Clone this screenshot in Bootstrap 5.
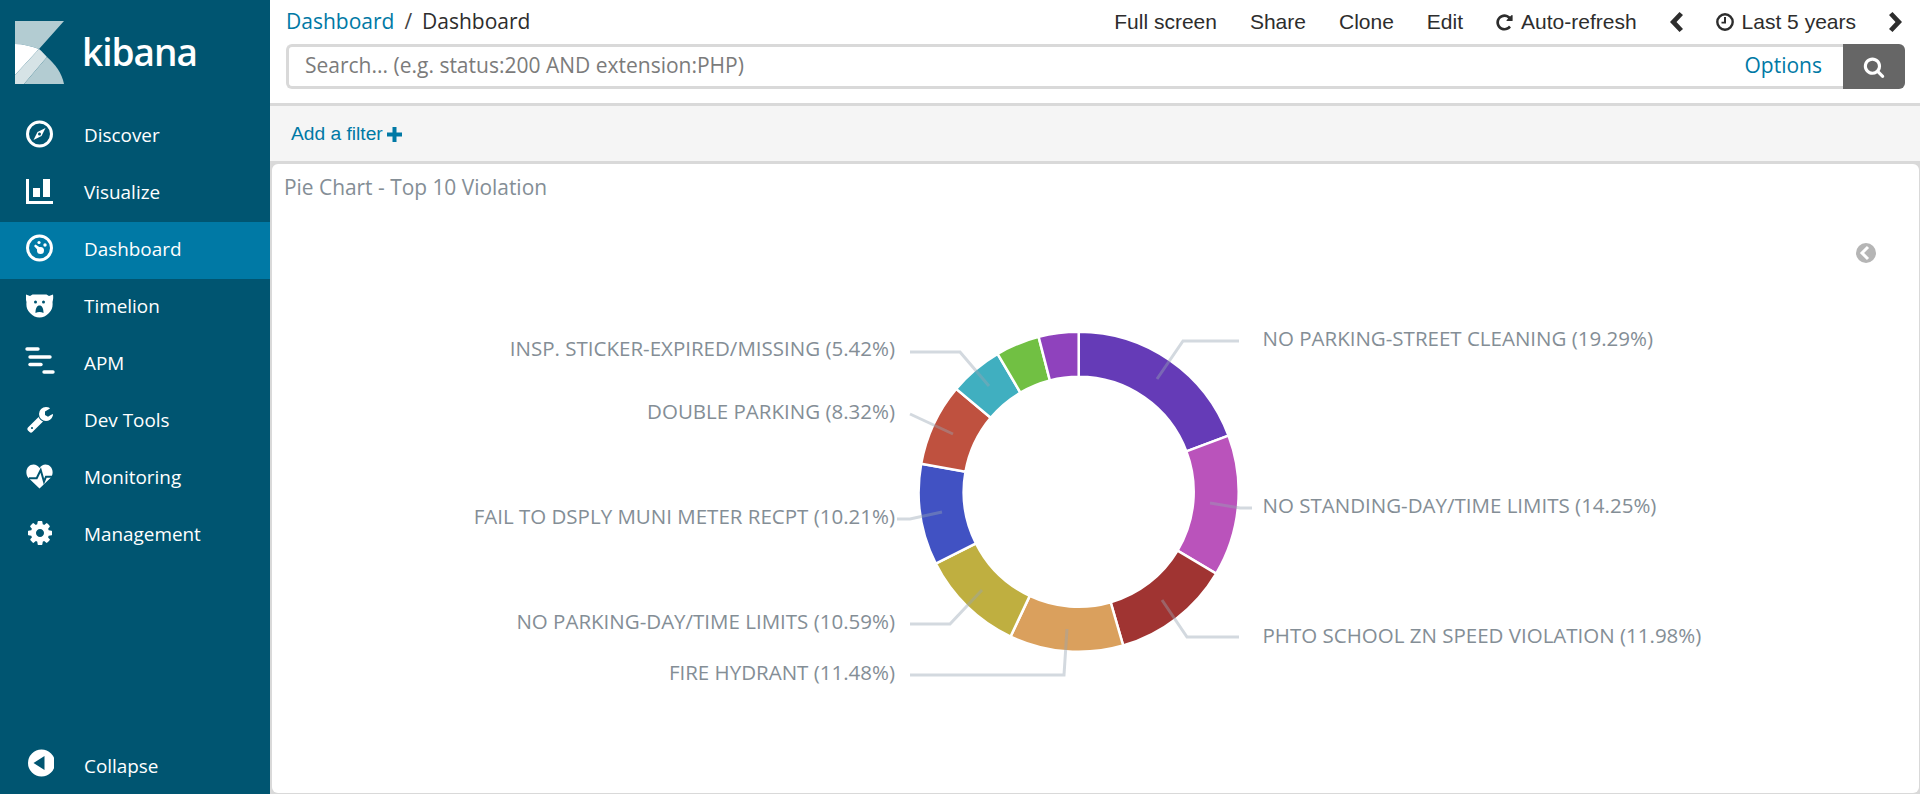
<!DOCTYPE html>
<html>

<head>
    <title>Dashboard - Kibana</title>
    <link href="https://cdn.jsdelivr.net/npm/bootstrap@5.3.0/dist/css/bootstrap.min.css" rel="stylesheet">
    <style>
        html, body { height: 100%; }
        body { font-family: "Open Sans", sans-serif; background: #fff; overflow: hidden; }
        .side-bar { width: 270px; background: #005571; height: 794px; flex: none; }
        .brand-row { height: 108px; padding: 21px 0 0 15px; }
        .brand-name { font-size: 37px; line-height: 1; color: #fff; margin: 12px 0 0 18px; font-weight: 600; letter-spacing: -1px; }
        .side-link { height: 57px; color: #fff; font-size: 18.9px; padding: 0 0 2px 26px; }
        .side-link:hover, .side-link:focus { color: #fff; }
        .side-link.is-on { background: #0079a5; }
        .side-link.at-end { padding: 2px 0 0 26px; }
        .side-ico { width: 28px; height: 28px; margin: -4px 30px 0 0; flex: none; fill: #fff; }
        .side-link.at-end .side-ico { margin-top: -8px; }
        .main-col { min-width: 0; height: 794px; background: #d9d9d9; }
        .top-area { background: #fff; height: 103px; padding: 0 15px 0 16px; }
        .crumb-row { height: 44px; }
        .breadcrumb { font-size: 21px; --bs-breadcrumb-divider-color: #444; --bs-breadcrumb-item-active-color: #2d2d2d; --bs-breadcrumb-margin-bottom: 0; --bs-breadcrumb-item-padding-x: 10px; }
        .breadcrumb a { color: #0079a5; text-decoration: none; }
        .top-actions { font-family: "Liberation Sans", Arial, sans-serif; font-size: 21px; color: #2d2d2d; gap: 33px; padding-right: 3px; }
        .top-actions svg { fill: #2d2d2d; flex: none; }
        .query-box { height: 45px; border: 3px solid #d9d9d9; border-right: 0; border-radius: 6px 0 0 6px; padding: 0 21px 0 16px; background: #fff; }
        .query-box input { border: 0; outline: 0; padding: 0 0 2px; font-size: 21px; color: #333; font-family: "Open Sans", sans-serif; }
        .query-box input::placeholder { color: #7b7b7b; opacity: 1; }
        .query-box a { font-size: 21px; color: #0079a5; text-decoration: none; padding-bottom: 2px; }
        .query-btn { width: 62px; height: 45px; background: #666; border-radius: 0 6px 6px 0; flex: none; border: 0; }
        .filter-bar { height: 61px; flex: none; background: #f5f5f5; border-top: 3px solid #d9d9d9; border-bottom: 3px solid #d9d9d9; padding: 2px 0 0 21px; font-family: "Liberation Sans", Arial, sans-serif; font-size: 19.2px; color: #0079a5; }
        .filter-bar svg { fill: #0079a5; margin-left: 4px; }
        .panel-box { flex: 1 1 auto; margin: 0 1px 1px 2px; border: 0; border-radius: 6px; background: #fff; position: relative; }
        .panel-title { font-size: 20.9px; color: #848e96; padding: 9px 0 0 12px; line-height: 28px; }
        .pie-canvas { position: absolute; left: -272px; top: -164px; width: 1920px; height: 794px; pointer-events: none; }
        .pie-canvas text { font-family: "Open Sans", sans-serif; font-size: 20.5px; fill: #848e96; }
        .leader { fill: none; stroke: rgba(150, 164, 178, .42); stroke-width: 3; }
    </style>
</head>

<body class="d-flex">
    <nav class="side-bar d-flex flex-column">
        <div class="brand-row d-flex align-items-start">
            <svg width="49" height="63" viewBox="0 0 49 63">
                <path fill="#b3ccd2" d="M0 0H49L24 28C16 25 8 23 0 23Z" />
                <path fill="#fff" d="M0 23C8 23 16 25 24 28L0 54Z" />
                <path fill="#d6e3e6" d="M0 54L24 28C27 30 29 33 32 36L9 63H0Z" />
                <path fill="#b3ccd2" d="M9 63L32 36C40 43 47 52 49 63Z" />
            </svg>
            <div class="brand-name">kibana</div>
        </div>
        <a class="nav-link side-link d-flex align-items-center" href="#">
            <svg class="side-ico" viewBox="0 0 28 28">
                <circle cx="13.500" cy="14" r="12" fill="none" stroke="#fff" stroke-width="3" />
                <path d="M19.500 8L15.500 16L7.500 20L11.500 12ZM13.500 12.500A1.500 1.500 0 1 0 13.500 15.500A1.500 1.500 0 1 0 13.500 12.500Z" fill-rule="evenodd" />
            </svg>Discover
        </a>
        <a class="nav-link side-link d-flex align-items-center" href="#">
            <svg class="side-ico" viewBox="0 0 28 28">
                <path d="M0 2H3V24H27V27H0ZM7 11H14V20H7ZM17 2H24V20H17Z" />
            </svg>Visualize
        </a>
        <a class="nav-link side-link is-on d-flex align-items-center" href="#">
            <svg class="side-ico" viewBox="0 0 28 28">
                <circle cx="13.500" cy="14" r="12" fill="none" stroke="#fff" stroke-width="3" />
                <circle cx="14.500" cy="16.500" r="3.500" />
                <path d="M8 12L9.500 10.500L15.500 14.500L13 17.500Z" />
                <circle cx="19" cy="11" r="1.700" />
                <circle cx="13" cy="8.500" r="1.600" />
            </svg>Dashboard
        </a>
        <a class="nav-link side-link d-flex align-items-center" href="#">
            <svg class="side-ico" viewBox="0 0 28 28">
                <path fill-rule="evenodd" d="M0 3.500L4 5L6.500 3.500H20.500L23 5L27 3.500C27.500 7 27 9 26.500 11C27 16 26 19 23 22C20 25 17 26.500 13.500 26.500C10 26.500 7 25 4 22C1 19 0 16 .5 11C0 9 -.5 7 0 3.500ZM9.500 9.500A1.500 1.500 0 1 0 9.500 12.500A1.500 1.500 0 1 0 9.500 9.500ZM17.500 9.500A1.500 1.500 0 1 0 17.500 12.500A1.500 1.500 0 1 0 17.500 9.500ZM9.500 22C9.500 17 11 14.500 13.500 14.500C16 14.500 17.500 17 17.500 22C15 20.500 12 20.500 9.500 22Z" />
            </svg>Timelion
        </a>
        <a class="nav-link side-link d-flex align-items-center" href="#">
            <svg class="side-ico" viewBox="0 0 28 28" style="overflow:visible">
                <g fill="none" stroke="#fff" stroke-width="3.400" stroke-linecap="round">
                    <path d="M1 1H12" />
                    <path d="M4 9H24" />
                    <path d="M4 16.500H15" />
                    <path d="M18 24H27" />
                </g>
            </svg>APM
        </a>
        <a class="nav-link side-link d-flex align-items-center" href="#">
            <svg class="side-ico" viewBox="0 0 1792 1792">
                <path d="M448 1472q0-26-19-45t-45-19-45 19-19 45 19 45 45 19 45-19 19-45zm644-420l-682 682q-37 37-90 37-52 0-90-37l-106-108q-38-36-38-90 0-53 38-91l681-681q39 98 114.500 173.500t173.500 114.500zm634-435q0 39-23 106-47 134-164.500 217.500t-258.500 83.500q-185 0-316.500-131.500t-131.500-316.500 131.500-316.500 316.500-131.500q58 0 121.500 16.500t107.500 46.500q16 11 16 28t-16 28l-293 169v224l193 107q5-3 79-48.500t135.500-81 70.500-35.500q15 0 23.500 10t8.500 25z" />
            </svg>Dev Tools
        </a>
        <a class="nav-link side-link d-flex align-items-center" href="#">
            <svg class="side-ico" viewBox="0 0 28 28">
                <path d="M13.500 26.500L2 15.500C-2 9 2 2.500 7.500 2.500C10 2.500 12 3.800 13.500 6C15 3.800 17 2.500 19.500 2.500C25 2.500 29 9 25 15.500Z" />
                <path d="M3 16.300H10.700L14.700 8L18 19.700L20 14.700H27.500" fill="none" stroke="#005571" stroke-width="2" />
            </svg>Monitoring
        </a>
        <a class="nav-link side-link d-flex align-items-center" href="#">
            <svg class="side-ico" viewBox="0 0 1792 1792">
                <path d="M1152 896q0-106-75-181t-181-75-181 75-75 181 75 181 181 75 181-75 75-181zm512-109v222q0 12-8 23t-20 13l-185 28q-19 54-39 91 35 50 107 138 10 12 10 25t-9 23q-27 37-99 108t-94 71q-12 0-26-9l-138-108q-44 23-91 38-16 136-29 186-7 28-36 28h-222q-14 0-24.500-8.500t-11.500-21.500l-28-184q-49-16-90-37l-141 107q-10 9-25 9-14 0-25-11-126-114-165-168-7-10-7-23 0-12 8-23 15-21 51-66.500t54-70.500q-27-50-41-99l-183-27q-13-2-21-12.500t-8-23.500v-222q0-12 8-23t19-13l186-28q14-46 39-92-40-57-107-138-10-12-10-24 0-10 9-23 26-36 98.500-107.500t94.500-71.500q13 0 26 10l138 107q44-23 91-38 16-136 29-186 7-28 36-28h222q14 0 24.500 8.500t11.500 21.500l28 184q49 16 90 37l142-107q9-9 24-9 13 0 25 10 129 119 165 170 7 8 7 22 0 12-8 23-15 21-51 66.500t-54 70.500q26 50 41 98l183 28q13 2 21 12.500t8 23.500z" />
            </svg>Management
        </a>
        <a class="nav-link side-link at-end d-flex align-items-center mt-auto" href="#">
            <svg class="side-ico" viewBox="0 0 28 28">
                <path fill-rule="evenodd" d="M15.500 .5A13.500 13.500 0 1 0 15.500 27.500A13.500 13.500 0 1 0 15.500 .5ZM18.500 7V21L7.500 14Z" />
            </svg>Collapse
        </a>
    </nav>

    <div class="main-col flex-grow-1 d-flex flex-column">
        <div class="top-area flex-none">
            <div class="crumb-row d-flex justify-content-between align-items-center">
                <ol class="breadcrumb">
                    <li class="breadcrumb-item"><a href="#">Dashboard</a></li>
                    <li class="breadcrumb-item active">Dashboard</li>
                </ol>
                <div class="top-actions d-flex align-items-center">
                    <span>Full screen</span>
                    <span>Share</span>
                    <span>Clone</span>
                    <span>Edit</span>
                    <span class="d-flex align-items-center gap-2">
                        <svg width="17" height="19" viewBox="100 100 1600 1600">
                            <path d="M1664 256v448q0 26-19 45t-45 19h-448q-42 0-59-40-17-39 14-69l138-138q-148-137-349-137-104 0-198.500 40.500t-163.500 109.500-109.500 163.500-40.500 198.500 40.500 198.500 109.500 163.500 163.500 109.500 198.500 40.500q119 0 225-52t179-147q7-10 23-12 14 0 25 9l137 138q9 8 9.500 20.500t-7.500 22.500q-109 132-264 204.500t-327 72.500q-156 0-298-61t-245-164-164-245-61-298 61-298 164-245 245-164 298-61q147 0 284.500 55.500t244.500 156.500l130-129q29-31 70-14 39 17 39 59z" />
                        </svg>Auto-refresh
                    </span>
                    <svg width="13" height="20" viewBox="0 0 13 20"><path d="M9.500 0L13 3L6.500 10L13 17L9.500 20L0 10Z" /></svg>
                    <span class="d-flex align-items-center gap-2">
                        <svg width="18" height="18" viewBox="0 0 18 18">
                            <circle cx="9" cy="9" r="7.700" fill="none" stroke="#2d2d2d" stroke-width="2.400" />
                            <path d="M8 4H10V10.500H5.500V8.800H8Z" />
                        </svg>Last 5 years
                    </span>
                    <svg width="13" height="20" viewBox="0 0 13 20"><path d="M3.500 0L0 3L6.500 10L0 17L3.500 20L13 10Z" /></svg>
                </div>
            </div>
            <form class="d-flex" onsubmit="return false">
                <div class="query-box flex-grow-1 d-flex align-items-center">
                    <input class="flex-grow-1" type="text" placeholder="Search... (e.g. status:200 AND extension:PHP)">
                    <a href="#">Options</a>
                </div>
                <button class="query-btn btn d-flex align-items-center justify-content-center" type="button">
                    <svg width="22" height="22" viewBox="0 0 1792 1792" fill="#fff">
                        <path d="M1216 832q0-185-131.500-316.500t-316.500-131.500-316.500 131.500-131.500 316.500 131.500 316.500 316.500 131.500 316.500-131.500 131.500-316.500zm512 832q0 52-38 90t-90 38q-54 0-90-38l-343-342q-179 124-399 124-143 0-273.500-55.500t-225-150-150-225-55.500-273.500 55.500-273.500 150-225 225-150 273.500-55.500 273.500 55.500 225 150 150 225 55.500 273.500q0 220-124 399l343 343q37 37 37 90z" />
                    </svg>
                </button>
            </form>
        </div>

        <div class="filter-bar d-flex align-items-center">
            <span>Add a filter</span>
            <svg width="15" height="15" viewBox="0 0 15 15"><path d="M5.500 0H9.500V5.500H15V9.500H9.500V15H5.500V9.500H0V5.500H5.500Z" /></svg>
        </div>

        <div class="panel-box">
            <div class="panel-title">Pie Chart - Top 10 Violation</div>
            <svg class="pie-canvas" id="pie" viewBox="0 0 1920 794">
                <g id="slices"></g>
                <path class="leader" d="M1239 341H1183L1157 379" />
                <path class="leader" d="M1252 508H1240L1210 503" />
                <path class="leader" d="M1239 637H1187L1162 600" />
                <path class="leader" d="M910 352H960L989 386" />
                <path class="leader" d="M910 414L953 434" />
                <path class="leader" d="M897 519H910L942 512" />
                <path class="leader" d="M910 624H950L982 590" />
                <path class="leader" d="M910 675H1064L1067 629" />
                <text x="1262.500" y="346">NO PARKING-STREET CLEANING (19.29%)</text>
                <text x="1262.500" y="513">NO STANDING-DAY/TIME LIMITS (14.25%)</text>
                <text x="1262.500" y="643">PHTO SCHOOL ZN SPEED VIOLATION (11.98%)</text>
                <text x="895" y="356" text-anchor="end">INSP. STICKER-EXPIRED/MISSING (5.42%)</text>
                <text x="895" y="419" text-anchor="end">DOUBLE PARKING (8.32%)</text>
                <text x="895" y="524" text-anchor="end">FAIL TO DSPLY MUNI METER RECPT (10.21%)</text>
                <text x="895" y="629" text-anchor="end">NO PARKING-DAY/TIME LIMITS (10.59%)</text>
                <text x="895" y="680" text-anchor="end">FIRE HYDRANT (11.48%)</text>
                <circle cx="1866" cy="253" r="10" fill="#b5b5b5" />
                <path d="M1868 247L1862 253L1868 259" fill="none" stroke="#fff" stroke-width="3" />
            </svg>
        </div>
    </div>

    <script>
        // donut slices, clockwise from 12 o'clock
        const slices = [
            [19.29, '#653bb7'], [14.25, '#ba53bb'], [11.98, '#a03432'], [11.48, '#daa05d'],
            [10.59, '#bfaf40'], [10.21, '#4152c3'], [8.32, '#bf513f'], [5.42, '#40afc0'],
            [4.43, '#71c043'], [4.03, '#8f42bd']
        ];
        const cx = 1078.7, cy = 491.8, outer = 160, inner = 115;

        function pt(r, pct) {
            const a = pct / 100 * 2 * Math.PI;
            return (cx + r * Math.sin(a)).toFixed(2) + ' ' + (cy - r * Math.cos(a)).toFixed(2);
        }

        let start = 0;
        let html = '';
        slices.forEach(s => {
            const end = start + s[0];
            const big = s[0] > 50 ? 1 : 0;
            html += `<path fill="${s[1]}" stroke="#fff" stroke-width="2.5" d="M${pt(outer, start)}A${outer} ${outer} 0 ${big} 1 ${pt(outer, end)}L${pt(inner, end)}A${inner} ${inner} 0 ${big} 0 ${pt(inner, start)}Z"/>`;
            start = end;
        });
        document.getElementById('slices').innerHTML = html;
    </script>
    <script src="https://cdn.jsdelivr.net/npm/bootstrap@5.3.0/dist/js/bootstrap.bundle.min.js"></script>
</body>

</html>
